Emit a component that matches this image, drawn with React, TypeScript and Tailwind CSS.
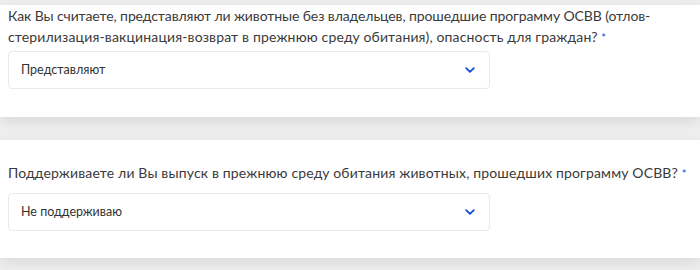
import React from "react";

function Chevron() {
  return (
    <svg width="10" height="6" viewBox="0 0 10 6" fill="none">
      <path d="M1.2 1.2L5 4.8L8.8 1.2" stroke="#0d4cd3" strokeWidth="1.8" strokeLinecap="round" strokeLinejoin="round" />
    </svg>
  );
}

function Select({ value }: { value: string }) {
  return (
    <div className="w-[482px] h-[38px] border border-[#e6e9ee] rounded-[4px] bg-white flex items-center justify-between pl-[12px] pr-[14px]">
      <span className="text-[12.5px] text-[#333333]">{value}</span>
      <Chevron />
    </div>
  );
}

export default function App() {
  return (
    <div className="w-[700px] h-[270px] overflow-hidden bg-[#efefef] pt-[5px] font-['Lato','Liberation_Sans',sans-serif]">
      <div className="bg-white h-[112px] pl-[8px] pt-[1px] shadow-[0_4px_14px_rgba(0,0,0,0.10)] relative">
        <p className="text-[14px] leading-[20.5px] text-[#3a3a3a] whitespace-nowrap">
          <span className="tracking-[-0.1px]">
            Как Вы считаете, представляют ли животные без владельцев, прошедшие программу ОСВВ (отлов-
          </span>
          <br />
          <span className="tracking-[0.15px]">
            стерилизация-вакцинация-возврат в прежнюю среду обитания), опасность для граждан?
          </span>{" "}
          <span className="text-[#0d4cd3] text-[11px]">*</span>
        </p>
        <div className="mt-[3px]">
          <Select value="Представляют" />
        </div>
      </div>
      <div className="h-[23px]" />
      <div className="bg-white h-[118px] pl-[8px] pt-[22.5px] shadow-[0_4px_14px_rgba(0,0,0,0.10)] relative">
        <p className="text-[14px] leading-[20.5px] text-[#3a3a3a] whitespace-nowrap tracking-[0.15px]">
          Поддерживаете ли Вы выпуск в прежнюю среду обитания животных, прошедших программу ОСВВ?{" "}
          <span className="text-[#0d4cd3] text-[11px]">*</span>
        </p>
        <div className="mt-[9px]">
          <Select value="Не поддерживаю" />
        </div>
      </div>
    </div>
  );
}
